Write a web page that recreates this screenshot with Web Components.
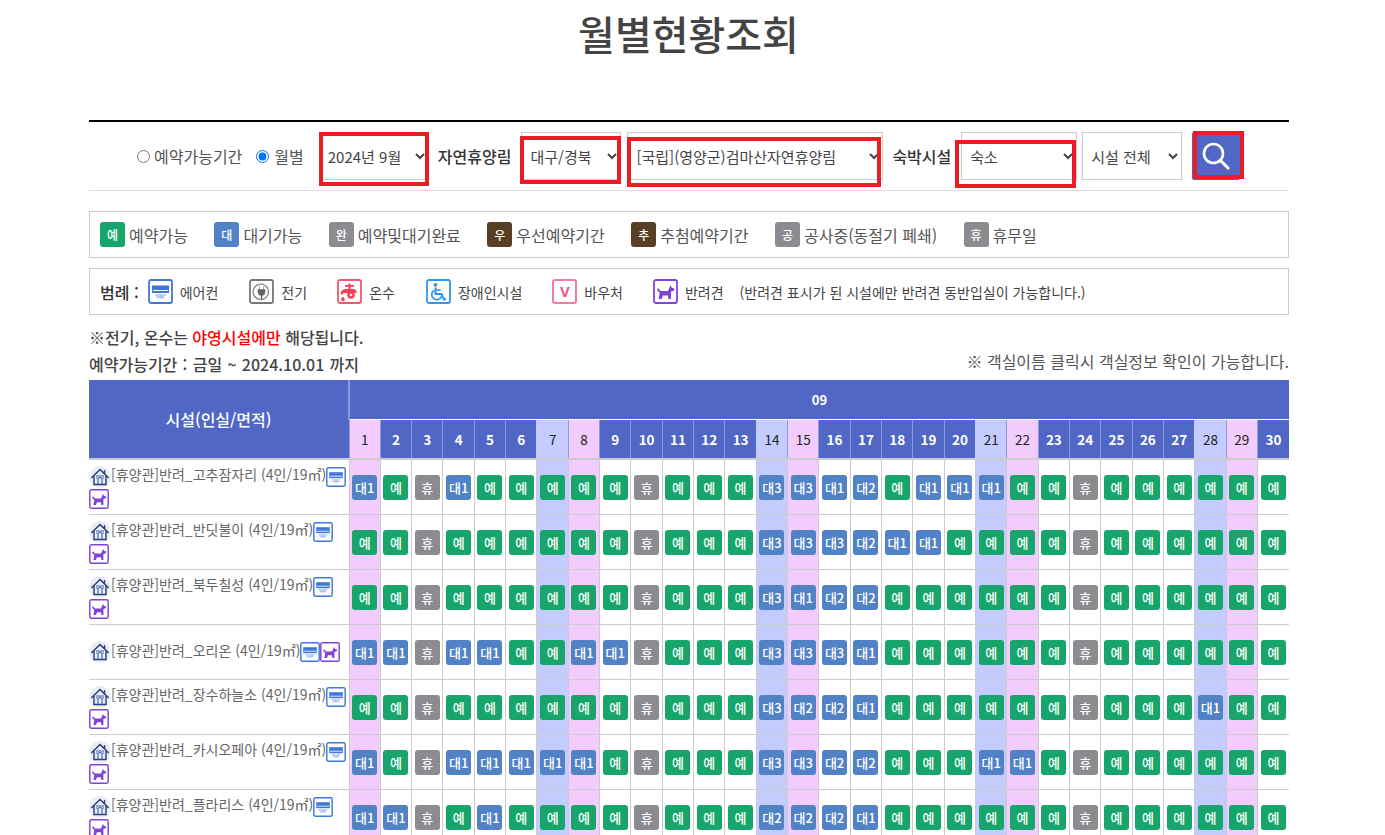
<!DOCTYPE html>
<html lang="ko"><head><meta charset="utf-8"><title>월별현황조회</title>
<style>
html,body{margin:0;padding:0;background:#fff;height:835px;overflow:hidden}
body{font-family:"Noto Sans CJK KR","Noto Sans",sans-serif;color:#444}
x-page{display:block;width:1200px;margin-left:89px}
</style></head><body>
<x-page>
  <x-title>월별현황조회</x-title>
  <x-search></x-search>
  <x-status-legend></x-status-legend>
  <x-amenity-legend></x-amenity-legend>
  <x-notes></x-notes>
  <x-calendar></x-calendar>
</x-page>
<script>
const ICONS={
ac:{c:'#3f78d8',s:'<path d="M4 6.500h17v7.500H4z" fill="#3f78d8"/><path d="M5 11.500h15" stroke="#fff" stroke-width="1"/><path d="M8 15.500l1.500 4M10.500 15.500l1 4M12.500 15.500v4M14.500 15.500l-1 4M16.500 15.500l-1.500 4M7 16h11M9 18h7" stroke="#8fb2ea" stroke-width=".8" fill="none"/>'},
power:{c:'#777',s:'<path d="M16.500 6.700A7.700 7.700 0 1 0 19.500 12.500c0-2.400-1-4.300-3-5.800" fill="none" stroke="#888" stroke-width="1.300"/><path d="M10.500 7.500v3M14.500 7.500v3M9 10.500h7v2.500a3.500 3.500 0 0 1-7 0z" fill="#666" stroke="#666" stroke-width=".6"/><path d="M12.500 16v4" stroke="#666" stroke-width="1.400"/>'},
hot:{c:'#f4566b',s:'<path d="M8 6h9v1.800H8zM11.500 4.500h2V10h-2z" fill="#ef4159"/><path d="M3.500 15c0-3.500 3-5 6-5h7a3.500 3.500 0 0 1 3 2v2h-12c-1 0-1.500.5-1.500 1.500z" fill="#ef4159"/><circle cx="14" cy="16" r="3.800" fill="#ef4159"/><circle cx="14" cy="16" r="1.300" fill="#fff"/><path d="M6 17.500c1.200 1.500 1.800 2.300 1.800 3a1.800 1.800 0 0 1-3.600 0c0-.7.600-1.500 1.800-3z" fill="#ef4159"/>'},
wheel:{c:'#2f96ee',s:'<circle cx="9.500" cy="5.800" r="1.900" fill="#2f96ee"/><path d="M9.500 8.500v6.500h6l2.500 5.500 2-.8" fill="none" stroke="#2f96ee" stroke-width="2"/><path d="M9.500 11h5" stroke="#2f96ee" stroke-width="1.600"/><path d="M8 11.500a5 5 0 1 0 7.500 5.800" fill="none" stroke="#2f96ee" stroke-width="1.700"/>'},
dog:{c:'#8043d9',s:'<path d="M5 9l2.500 3h7.500l2.500-6 1 2.500 3 1-.6 2.200-2.900.8v7.500h-2.500l-.6-3.500H10l-1.300 3.500H5.600l1-6.200-2.800-2.800z" fill="#8043d9"/>'}
};
const box=(c,s)=>`<svg viewBox="0 0 25 25" width="100%" height="100%"><rect x="1" y="1" width="23" height="23" rx="2" fill="#fff" stroke="${c}" stroke-width="1.800"/>${s}</svg>`;

class Base extends HTMLElement{
  render(html){this.attachShadow({mode:'open'}).innerHTML=html}
}
class XAmenity extends Base{
  connectedCallback(){ if(this.shadowRoot)return;
    const t=this.getAttribute('type'),size=this.getAttribute('size')||'20';
    let inner;
    if(t==='voucher') inner=`<span class="v">V</span>`;
    else inner=box(ICONS[t].c,ICONS[t].s);
    this.render(`<style>:host{display:inline-block;width:${size}px;height:${size}px;vertical-align:middle;line-height:0}
    svg{display:block}.v{display:flex;box-sizing:border-box;width:100%;height:100%;align-items:center;justify-content:center;border:2px solid #f47ba6;border-radius:3px;color:#f0558f;font:700 15px/1 "Noto Sans","Noto Sans CJK KR",sans-serif}</style>${inner}`);
  }
}
customElements.define('x-amenity',XAmenity);

class XHouse extends Base{
  connectedCallback(){ if(this.shadowRoot)return;
    this.render(`<style>:host{display:inline-block;width:22px;height:22px;vertical-align:middle;line-height:0}</style>
    <svg viewBox="0 0 22 22" width="22" height="22"><circle cx="11" cy="11" r="11" fill="#e9eef4"/>
    <path d="M2.800 11.500L11 3.500l8.200 8M15.500 4.800v3" fill="none" stroke="#2b3a7a" stroke-width="1.500" stroke-linecap="round"/>
    <path d="M5 10v8.500h12V10" fill="none" stroke="#2b3a7a" stroke-width="1.400"/>
    <path d="M9 18.500v-5a2 2 0 0 1 4 0v5M7 10h8M7 12h1.500M13.500 12H15" fill="none" stroke="#3f5fa8" stroke-width="1.100"/></svg>`);
  }
}
customElements.define('x-house',XHouse);

const COLORS={g:'#17a56b',b:'#5282c6',n:'#8b8b90',w:'#563f23'};
class XBadge extends Base{
  connectedCallback(){ if(this.shadowRoot)return;
    const c=COLORS[this.getAttribute('tone')]||COLORS.n,fs=this.getAttribute('fs')||'13';
    this.render(`<style>:host{display:inline-flex;width:25px;height:25px;flex:none;align-items:center;justify-content:center;border-radius:3px;background:${c};color:#fff;font-size:${fs}px;font-weight:500;line-height:1}</style><slot></slot>`);
  }
}
customElements.define('x-badge',XBadge);

class XTitle extends Base{
  connectedCallback(){ if(this.shadowRoot)return;
    this.render(`<style>:host{display:block;height:120px;box-sizing:border-box;text-align:center;font-size:40px;font-weight:500;line-height:66px;color:#444;padding-right:1px}</style><slot></slot>`);
  }
}
customElements.define('x-title',XTitle);

class XSearch extends Base{
  connectedCallback(){ if(this.shadowRoot)return;
    this.render(`<style>
    :host{display:block;position:relative;height:71px;box-sizing:border-box;border-top:2px solid #000;border-bottom:1px solid #ddd;font-size:16px;color:#555}
    .row{display:flex;align-items:flex-start;padding:10px 0 0 48px}
    label{display:flex;align-items:center;height:48px;white-space:nowrap;color:#555}
    input{margin:0 4px 0 0;width:13px;height:13px;flex:none}
    select{height:48px;box-sizing:border-box;border:1px solid #ccc;background:#fff;font:15px "Noto Sans CJK KR",sans-serif;color:#444;padding:0 0 0 4px;border-radius:0;flex:none}
    b{font-weight:500;color:#333;white-space:nowrap;line-height:48px}
    button{width:48px;height:48px;border:0;padding:0;background:#5067c5;border-radius:2px;margin-left:10px;display:flex;align-items:center;justify-content:center;flex:none}
    .red{position:absolute;box-sizing:border-box;border:4px solid #ed1c24;pointer-events:none}
    </style>
    <div class="row">
      <label style="margin-right:14px"><input type="radio" name="m">예약가능기간</label>
      <label style="margin-right:16px"><input type="radio" name="m" checked style="margin-right:5px">월별</label>
      <select style="width:110px;margin-left:-1px"><option>2024년 9월</option></select>
      <b style="margin:0 10px 0 9px">자연휴양림</b>
      <select style="width:100px"><option>대구/경북</option></select>
      <select style="width:256px;margin-left:6px"><option>[국립](영양군)검마산자연휴양림</option></select>
      <b style="margin:0 10px 0 9px">숙박시설</b>
      <select style="width:116px"><option>숙소</option></select>
      <select style="width:100px;margin-left:5px"><option>시설 전체</option></select>
      <button aria-label="검색"><svg width="30" height="30" viewBox="0 0 30 30"><circle cx="12.500" cy="12.500" r="9.500" fill="none" stroke="#fff" stroke-width="2.600"/><path d="M19.500 19.500l7.500 7.500" stroke="#fff" stroke-width="3" stroke-linecap="round"/></svg></button>
    </div>
    <div class="red" style="left:230px;top:10px;width:110px;height:54px"></div>
    <div class="red" style="left:431px;top:14px;width:101px;height:48px"></div>
    <div class="red" style="left:538px;top:15px;width:254px;height:50px"></div>
    <div class="red" style="left:866px;top:18px;width:121px;height:48px"></div>
    <div class="red" style="left:1104px;top:9px;width:51px;height:48px"></div>`);
  }
}
customElements.define('x-search',XSearch);

class XStatusLegend extends Base{
  connectedCallback(){ if(this.shadowRoot)return;
    const items=[['g','예','예약가능'],['b','대','대기가능'],['n','완','예약및대기완료'],['w','우','우선예약기간'],['w','추','추첨예약기간'],['n','공','공사중(동절기 폐쇄)'],['n','휴','휴무일']];
    this.render(`<style>:host{display:flex;box-sizing:border-box;height:47px;margin-top:20px;border:1px solid #ccc;align-items:center;padding:0 0 0 10px;gap:26.500px;font-size:16px;color:#555}
    span{display:flex;align-items:center;gap:4px;white-space:nowrap}</style>`+
    items.map(i=>`<span><x-badge tone="${i[0]}" fs="12">${i[1]}</x-badge>${i[2]}</span>`).join(''));
  }
}
customElements.define('x-status-legend',XStatusLegend);

class XAmenityLegend extends Base{
  connectedCallback(){ if(this.shadowRoot)return;
    const items=[['ac','에어컨',31],['power','전기',30],['hot','온수',31],['wheel','장애인시설',30],['voucher','바우처',30],['dog','반려견',16]];
    this.render(`<style>:host{display:flex;box-sizing:border-box;height:47px;margin-top:10px;border:1px solid #ccc;align-items:center;padding:0 0 0 10px;font-size:14px;color:#444}
    b{font-size:16px;font-weight:500;margin-right:9px;color:#333;white-space:nowrap}
    span{display:flex;align-items:center;gap:7px;white-space:nowrap}
    i{font-style:normal;white-space:nowrap}</style><b>범례 :</b>`+
    items.map(i=>`<span style="margin-right:${i[2]}px"><x-amenity type="${i[0]}" size="25"></x-amenity>${i[1]}</span>`).join('')+
    `<i>(반려견 표시가 된 시설에만 반려견 동반입실이 가능합니다.)</i>`);
  }
}
customElements.define('x-amenity-legend',XAmenityLegend);

class XNotes extends Base{
  connectedCallback(){ if(this.shadowRoot)return;
    this.render(`<style>:host{display:block;height:65px;box-sizing:border-box;padding-top:9px;font-size:16px;font-weight:500;color:#444;line-height:26px}
    em{font-style:normal;color:#f00}.r{display:flex;justify-content:space-between;align-items:flex-end}
    .r span{word-spacing:.8px}
    small{font-size:16px;font-weight:400;color:#555;line-height:22px;margin-bottom:5px}</style>
    <div>※전기, 온수는 <em>야영시설에만</em> 해당됩니다.</div>
    <div class="r"><span>예약가능기간 : 금일 ~ 2024.10.01 까지</span><small>※ 객실이름 클릭시 객실정보 확인이 가능합니다.</small></div>`);
  }
}
customElements.define('x-notes',XNotes);

const ROWS=[
['고추잠자리','대1 예 휴 대1 예 예 예 예 예 휴 예 예 예 대3 대3 대1 대2 예 대1 대1 대1 예 예 휴 예 예 예 예 예 예'],
['반딧불이','예 예 휴 예 예 예 예 예 예 휴 예 예 예 대3 대3 대3 대2 대1 대1 예 예 예 예 휴 예 예 예 예 예 예'],
['북두칠성','예 예 휴 예 예 예 예 예 예 휴 예 예 예 대3 대1 대2 대2 예 예 예 예 예 예 휴 예 예 예 예 예 예'],
['오리온','대1 대1 휴 대1 대1 예 예 대1 대1 휴 예 예 예 대3 대3 대3 대1 예 예 예 예 예 예 휴 예 예 예 예 예 예'],
['장수하늘소','예 예 휴 예 예 예 예 예 예 휴 예 예 예 대3 대2 대2 대1 예 예 예 예 예 예 휴 예 예 예 대1 예 예'],
['카시오페아','대1 예 휴 대1 대1 대1 대1 대1 예 휴 예 예 예 대3 대3 대2 대2 예 예 예 대1 대1 예 휴 예 예 예 예 예 예'],
['플라리스','대1 대1 휴 예 대1 예 예 예 예 휴 예 예 예 대2 대2 대2 대1 예 예 예 예 예 예 휴 예 예 예 예 예 예']
];
class XCalendar extends Base{
  connectedCallback(){ if(this.shadowRoot)return;
    const cls=d=>{const m=d%7;return m===0?'sat':m===1?'sun':''};
    let days='';for(let d=1;d<=30;d++)days+=`<th class="d ${cls(d)}">${d}</th>`;
    const tone=s=>s[0]==='예'?'g':s[0]==='대'?'b':'n';
    let rows=ROWS.map(r=>{
      const cells=r[1].split(' ').map((s,i)=>`<td class="${cls(i+1)}"><x-badge tone="${tone(s)}">${s}</x-badge></td>`).join('');
      return `<tr><td class="f"><x-house></x-house>[휴양관]반려_${r[0]} (4인/19㎡)<x-amenity type="ac"></x-amenity><x-amenity type="dog"></x-amenity></td>${cells}</tr>`;
    }).join('');
    this.render(`<style>:host{display:block;width:1200px}
    table{width:1200px;table-layout:fixed;border-collapse:collapse}
    th{background:#5067c5;color:#fff;font-size:14px;font-weight:700;padding:0;border:0}
    th.top{height:39px;font-size:13px;border-left:2px solid #8b9ad9;border-bottom:1px solid #fff}
    th.main{font-size:16px;font-weight:500;width:259px}
    th.d{height:38px;border-left:1px solid #8b9ad9;font-size:13.500px;font-weight:700}
    th.sat{background:#c3cbff;color:#222;font-weight:400;border-left-color:#c3cbff}
    th.sun{background:#f2ccfd;color:#222;font-weight:400;border-left-color:#8b9ad9}
    td{height:54px;padding:0;border:1px solid #ccc;text-align:center;background:#fff}
    td x-badge{display:flex;margin:0 auto}
    tbody tr:first-child td{border-top:2px solid #ccc}
    td.sat{background:#c3cbff}td.sun{background:#f2ccfd}
    td.f{text-align:left;border-left:0;font-size:14px;color:#666;line-height:18px;word-break:keep-all}
    tr>td:last-child{border-right:0}
    </style>
    <table><thead><tr><th class="main" rowspan="2">시설(인실/면적)</th><th class="top" colspan="30">09</th></tr><tr>${days}</tr></thead>
    <tbody>${rows}</tbody></table>`);
  }
}
customElements.define('x-calendar',XCalendar);
</script>
</body></html>
